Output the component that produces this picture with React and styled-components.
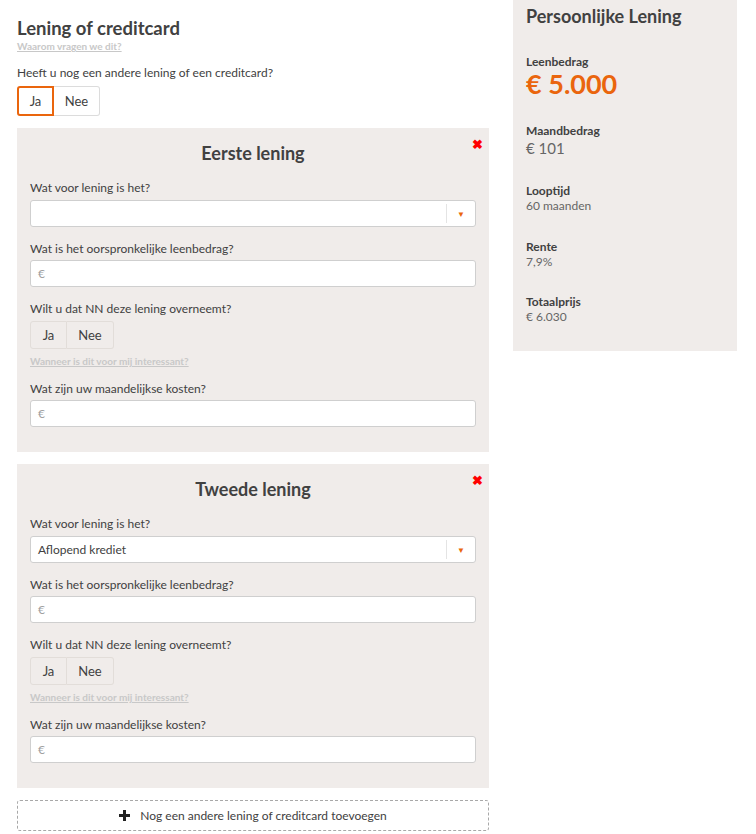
import React from "react";
import styled, { createGlobalStyle } from "styled-components";

const orange = "#ea650d";
const text = "#414141";
const panelBg = "#f0ecea";

const GlobalStyle = createGlobalStyle`
  body {
    margin: 0;
    font-family: Lato, "Noto Sans", sans-serif;
    color: ${text};
    background: white;
  }
`;

const Page = styled.div`
  display: flex;
  align-items: flex-start;
  gap: 24px;
  padding-left: 17px;
`;

const Main = styled.div`
  width: 472px;
  padding-top: 17px;
`;

const Title = styled.h1`
  font-size: 18.5px;
  font-weight: 700;
  margin: 0;
  line-height: 22px;
`;

const HelpLink = styled.a`
  display: block;
  font-size: 10px;
  font-weight: 700;
  color: #c8c8c8;
  text-decoration: underline;
  line-height: 14px;
  margin-top: ${(p) => p.$top || 0}px;
`;

const Question = styled.div`
  font-size: 12px;
  line-height: 16px;
  margin-top: ${(p) => p.$top || 0}px;
`;

const Toggle = styled.div`
  display: flex;
  margin-top: ${(p) => p.$top || 5}px;
`;

const ToggleButton = styled.button`
  box-sizing: border-box;
  font-family: inherit;
  font-size: 13px;
  color: ${text};
  width: ${(p) => p.$w}px;
  height: ${(p) => p.$h || 30}px;
  padding: 0;
  background: ${(p) => (p.$plain ? "transparent" : "white")};
  border: ${(p) =>
    p.$active ? `2px solid ${orange}` : `1px solid ${p.$plain ? "#e2ddd9" : "#dcdcdc"}`};
  border-radius: ${(p) => (p.$first ? "3px 0 0 3px" : "0 3px 3px 0")};
  ${(p) => (!p.$first && !p.$active ? "border-left: none;" : "")}
`;

const Panel = styled.section`
  position: relative;
  background: ${panelBg};
  margin-top: ${(p) => p.$top}px;
  padding: 14px 13px 25px;
`;

const PanelTitle = styled.h2`
  text-align: center;
  font-size: 18px;
  font-weight: 700;
  margin: 0;
  line-height: 22px;
`;

const Close = styled.span`
  position: absolute;
  top: 10px;
  right: 6px;
  color: #ff0000;
  font-size: 13px;
  font-weight: 900;
  line-height: 13px;
`;

const Label = styled.div`
  font-size: 12px;
  line-height: 15px;
  margin-top: ${(p) => p.$top}px;
  margin-bottom: ${(p) => p.$bottom || 5}px;
`;

const Field = styled.div`
  display: flex;
  align-items: center;
  height: 27px;
  box-sizing: border-box;
  background: white;
  border: 1px solid #cfcfcf;
  border-radius: 3px;
  padding-left: 7px;
  font-size: 12px;
  color: ${(p) => (p.$muted ? "#a0a0a0" : text)};
`;

const FieldValue = styled.span`
  flex: 1;
`;

const Caret = styled.span`
  display: flex;
  align-items: center;
  justify-content: center;
  width: 28px;
  height: 19px;
  border-left: 1px solid #e4e4e4;
  color: ${orange};
  font-size: 8px;
`;

const AddButton = styled.button`
  display: flex;
  align-items: center;
  justify-content: center;
  gap: 10px;
  width: 100%;
  height: 31px;
  margin-top: 12px;
  background: white;
  border: 1px dashed #a8a8a8;
  border-radius: 3px;
  font-family: inherit;
  font-size: 12px;
  color: ${text};
`;

const Sidebar = styled.aside`
  width: 224px;
  height: 351px;
  box-sizing: border-box;
  background: ${panelBg};
  padding: 5px 13px;
`;

const SideTitle = styled.div`
  font-size: 18px;
  font-weight: 700;
  line-height: 22px;
`;

const Stat = styled.div`
  margin-top: ${(p) => p.$top}px;
`;

const StatLabel = styled.div`
  font-size: 12px;
  font-weight: 700;
  line-height: 14px;
`;

const StatValue = styled.div`
  font-size: ${(p) => p.$size || 12}px;
  font-weight: ${(p) => (p.$big ? 700 : 400)};
  color: ${(p) => (p.$big ? orange : "#666")};
  line-height: ${(p) => (p.$big ? 30 : p.$size ? 20 : 16)}px;
`;

const Plus = () => (
  <svg width="11" height="11" viewBox="0 0 11 11">
    <path d="M4 0h3v4h4v3H7v4H4V7H0V4h4z" fill="#222" />
  </svg>
);

const Loan = ({ title, type, top }) => (
  <Panel $top={top}>
    <Close>✖</Close>
    <PanelTitle>{title}</PanelTitle>
    <Label $top={16}>Wat voor lening is het?</Label>
    <Field>
      <FieldValue>{type}</FieldValue>
      <Caret>▼</Caret>
    </Field>
    <Label $top={14} $bottom={4}>Wat is het oorspronkelijke leenbedrag?</Label>
    <Field $muted>€</Field>
    <Label $top={14}>Wilt u dat NN deze lening overneemt?</Label>
    <Toggle $top={4}>
      <ToggleButton $first $plain $w={37} $h={28}>Ja</ToggleButton>
      <ToggleButton $plain $w={47} $h={28}>Nee</ToggleButton>
    </Toggle>
    <HelpLink $top={5}>Wanneer is dit voor mij interessant?</HelpLink>
    <Label $top={13} $bottom={4}>Wat zijn uw maandelijkse kosten?</Label>
    <Field $muted>€</Field>
  </Panel>
);

const App = () => (
  <>
    <GlobalStyle />
    <Page>
      <Main>
        <Title>Lening of creditcard</Title>
        <HelpLink>Waarom vragen we dit?</HelpLink>
        <Question $top={12}>Heeft u nog een andere lening of een creditcard?</Question>
        <Toggle $top={5}>
          <ToggleButton $first $active $w={37}>Ja</ToggleButton>
          <ToggleButton $w={46}>Nee</ToggleButton>
        </Toggle>
        <Loan title="Eerste lening" type="" top={12} />
        <Loan title="Tweede lening" type="Aflopend krediet" top={12} />
        <AddButton>
          <Plus />
          Nog een andere lening of creditcard toevoegen
        </AddButton>
      </Main>
      <Sidebar>
        <SideTitle>Persoonlijke Lening</SideTitle>
        <Stat $top={28}>
          <StatLabel>Leenbedrag</StatLabel>
          <StatValue $big $size={27}>€ 5.000</StatValue>
        </Stat>
        <Stat $top={25}>
          <StatLabel>Maandbedrag</StatLabel>
          <StatValue $size={15}>€ 101</StatValue>
        </Stat>
        <Stat $top={26}>
          <StatLabel>Looptijd</StatLabel>
          <StatValue>60 maanden</StatValue>
        </Stat>
        <Stat $top={26}>
          <StatLabel>Rente</StatLabel>
          <StatValue>7,9%</StatValue>
        </Stat>
        <Stat $top={25}>
          <StatLabel>Totaalprijs</StatLabel>
          <StatValue>€ 6.030</StatValue>
        </Stat>
      </Sidebar>
    </Page>
  </>
);

export default App;
